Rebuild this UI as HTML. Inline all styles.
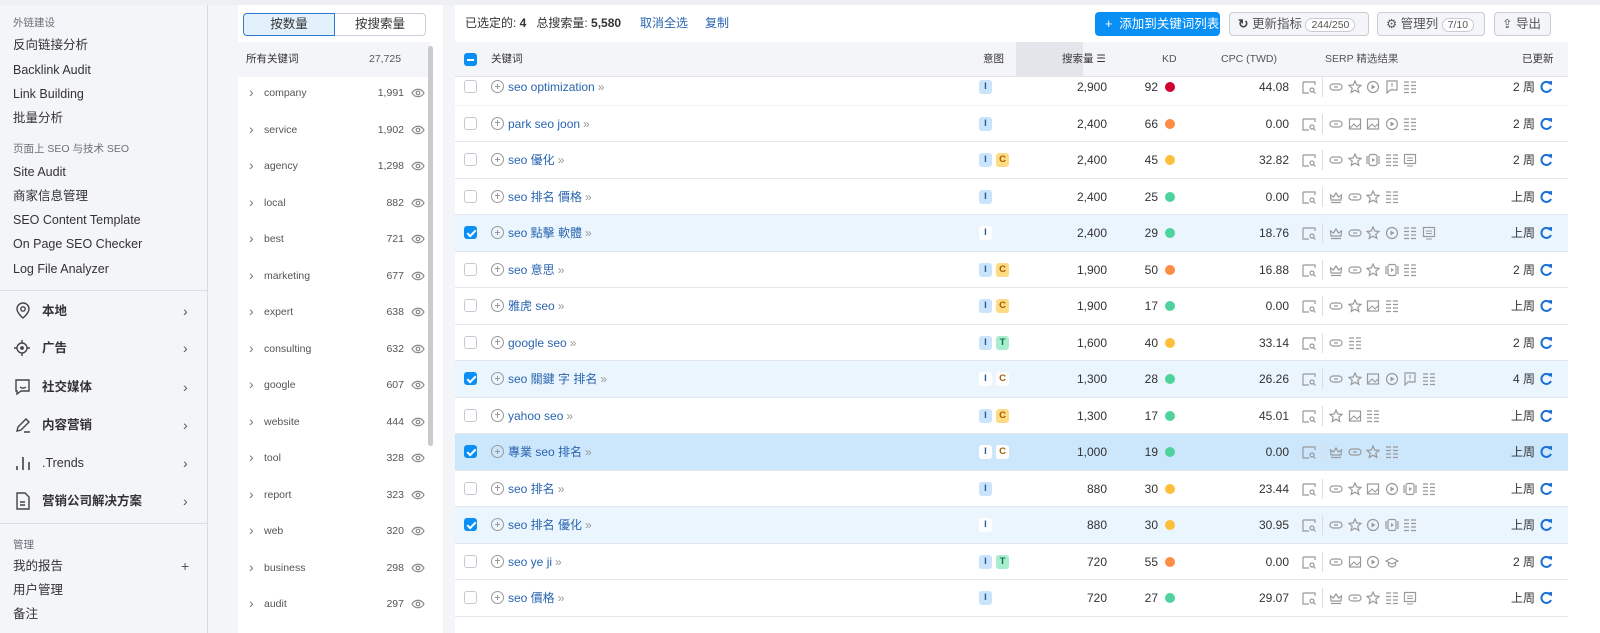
<!DOCTYPE html>
<html><head><meta charset="utf-8"><style>
*{box-sizing:border-box;margin:0;padding:0}
body{width:1600px;height:633px;overflow:hidden;background:#f4f5f9;font-family:"Liberation Sans","Noto Sans CJK SC",sans-serif;color:#333;position:relative;line-height:14px}
.a{position:absolute;white-space:nowrap;line-height:14px}
#side{left:0;top:5px;width:208px;height:628px;background:#f4f5f9;border-right:1px solid #d8dbe2}
.sm{font-size:10.5px;color:#6c6e79}
.si{font-size:12.5px;color:#333}
.nav{font-size:12.5px;font-weight:bold;color:#333}
.chev{color:#555;font-size:14px}
#panel{left:238px;top:5px;width:205px;height:628px;background:#fff}
.pi{font-size:10.5px;color:#555}
#main{left:455px;top:5px;width:1145px;height:628px;background:#fff}
.row{position:absolute;left:455px;width:1113px;height:36.5px;border-bottom:1px solid #e4e6eb;font-size:12px;line-height:14px}
.row div{line-height:14px}
.cb{position:absolute;left:9px;top:11px;width:13px;height:13px;border:1px solid #c5c8d0;border-radius:3px;background:#fff}
.cb.on{background:#0a8ff5;border-color:#0a8ff5}
.cb.on:after{content:"";position:absolute;left:3.5px;top:1px;width:3px;height:7px;border:solid #fff;border-width:0 2px 2px 0;transform:rotate(45deg)}
.pc{position:absolute;left:36px;top:11px;width:13px;height:13px;border:1.3px solid #999;border-radius:50%}
.pc:before{content:"";position:absolute;left:2.5px;top:4.7px;width:5.5px;height:1.3px;background:#999}
.pc:after{content:"";position:absolute;left:4.6px;top:2.5px;width:1.3px;height:5.5px;background:#999}
.kw{position:absolute;left:53px;top:11px;color:#2a65b0;font-size:12px}
.kw .gg{color:#999;margin-left:3px}
.bd{position:absolute;top:11px;width:13px;height:14px;border-radius:3px;font-size:9.5px;font-weight:bold;text-align:center;line-height:14px!important}
.bI{background:#c9e4fb;color:#2b5d9a}.bC{background:#fddb84;color:#a05a00}.bT{background:#a8edcd;color:#127050}
.bw{background:#fff!important}
.vol{position:absolute;right:461px;top:11px;color:#333}
.kd{position:absolute;right:410px;top:11px;color:#333}
.dot{position:absolute;left:710px;top:13px;width:10px;height:10px;border-radius:50%}
.cpc{position:absolute;right:279px;top:11px}
.ic{position:absolute;top:11px;width:14px;height:14px}
.up{position:absolute;right:33px;top:11px;color:#333}
.rf{position:absolute;right:15px;top:11px;width:14px;height:14px}
</style></head><body>
<div class="a" style="left:0;top:0;width:1600px;height:5px;background:#eef0f3"></div>
<div class="a" id="side"></div>
<div class="a sm" style="left:13px;top:16px">外链建设</div>
<div class="a si" style="left:13px;top:38px">反向链接分析</div>
<div class="a si" style="left:13px;top:63px">Backlink Audit</div>
<div class="a si" style="left:13px;top:87px">Link Building</div>
<div class="a si" style="left:13px;top:111px">批量分析</div>
<div class="a sm" style="left:13px;top:142px">页面上 SEO 与技术 SEO</div>
<div class="a si" style="left:13px;top:165px">Site Audit</div>
<div class="a si" style="left:13px;top:189px">商家信息管理</div>
<div class="a si" style="left:13px;top:213px">SEO Content Template</div>
<div class="a si" style="left:13px;top:237px">On Page SEO Checker</div>
<div class="a si" style="left:13px;top:262px">Log File Analyzer</div>
<div class="a" style="left:0;top:290px;width:207px;height:1px;background:#dcdfe5"></div>
<svg class="a" style="left:14px;top:302px" width="18" height="18" viewBox="0 0 18 18" fill="none" stroke="#444" stroke-width="1.4"><path d="M9 16s-6-5-6-9a6 6 0 0112 0c0 4-6 9-6 9z"/><circle cx="9" cy="7" r="2.2"/></svg>
<div class="a nav" style="left:42px;top:304px">本地</div><div class="a chev" style="left:183px;top:304px">›</div>
<svg class="a" style="left:13px;top:339px" width="18" height="18" viewBox="0 0 18 18" fill="none" stroke="#444" stroke-width="1.4"><circle cx="9" cy="9" r="5"/><circle cx="9" cy="9" r="1.2" fill="#444"/><path d="M9 1v3M9 14v3M1 9h3M14 9h3"/></svg>
<div class="a nav" style="left:42px;top:341px">广告</div><div class="a chev" style="left:183px;top:341px">›</div>
<svg class="a" style="left:14px;top:378px" width="18" height="18" viewBox="0 0 18 18" fill="none" stroke="#444" stroke-width="1.4"><path d="M2 2h13v11H7l-4 3V13H2z"/><path d="M6 9c2 1.5 4 1.5 6 0"/></svg>
<div class="a nav" style="left:42px;top:380px">社交媒体</div><div class="a chev" style="left:183px;top:380px">›</div>
<svg class="a" style="left:14px;top:416px" width="18" height="18" viewBox="0 0 18 18" fill="none" stroke="#444" stroke-width="1.4"><path d="M3 15l1-4 8-8 3 3-8 8z M10 16h6"/></svg>
<div class="a nav" style="left:42px;top:418px">内容营销</div><div class="a chev" style="left:183px;top:418px">›</div>
<svg class="a" style="left:14px;top:454px" width="18" height="18" viewBox="0 0 18 18" stroke="#444" stroke-width="1.6"><path d="M3 16v-4M9 16V3M15 16V8"/></svg>
<div class="a nav" style="left:42px;top:456px;font-weight:normal">.Trends</div><div class="a chev" style="left:183px;top:456px">›</div>
<svg class="a" style="left:15px;top:492px" width="16" height="18" viewBox="0 0 16 18" fill="none" stroke="#444" stroke-width="1.4"><path d="M2 1h8l4 4v12H2z M5 10h5M5 13h5"/></svg>
<div class="a nav" style="left:42px;top:494px">营销公司解决方案</div><div class="a chev" style="left:183px;top:494px">›</div>
<div class="a" style="left:0;top:523px;width:207px;height:1px;background:#dcdfe5"></div>
<div class="a sm" style="left:13px;top:538px">管理</div>
<div class="a si" style="left:13px;top:559px">我的报告</div><div class="a" style="left:181px;top:559px;font-size:14px;color:#555">+</div>
<div class="a si" style="left:13px;top:583px">用户管理</div>
<div class="a si" style="left:13px;top:607px">备注</div>

<div class="a" id="panel"></div>
<div class="a" style="left:243px;top:13px;width:92px;height:23px;border:1px solid #2e7bd0;border-radius:4px 0 0 4px;background:#e3f1fd;font-size:12.5px;text-align:center;line-height:21px;color:#333">按数量</div>
<div class="a" style="left:335px;top:13px;width:91px;height:23px;border:1px solid #ccd;border-left:none;border-radius:0 4px 4px 0;font-size:12.5px;text-align:center;line-height:21px;color:#333">按搜索量</div>
<div class="a" style="left:238px;top:42px;width:192px;height:35px;background:#f4f5f9"></div>
<div class="a pi" style="left:246px;top:52px;color:#333">所有关键词</div><div class="a pi" style="left:369px;top:52px">27,725</div>
<div class="a" style="left:428px;top:46px;width:5px;height:400px;background:#c8cace;border-radius:3px"></div>
<div id="pl"></div>

<div class="a" id="main"></div>
<div class="a" style="left:465px;top:16px;font-size:12px;color:#333">已选定的: <b>4</b> &nbsp; 总搜索量: <b>5,580</b></div>
<div class="a" style="left:640px;top:16px;font-size:12px;color:#2a65b0">取消全选</div>
<div class="a" style="left:705px;top:16px;font-size:12px;color:#2a65b0">复制</div>
<div class="a" style="left:1095px;top:12px;width:125px;height:24px;background:#0a8ff5;border-radius:4px;color:#fff;font-size:12.5px;line-height:24px;padding-left:10px">+ &nbsp;添加到关键词列表</div>
<div class="a" style="left:1229px;top:12px;width:140px;height:24px;border:1px solid #c8cbd3;border-radius:4px;background:#f4f5f9;font-size:12.5px;line-height:22px;padding-left:8px;color:#555"><b style="color:#444">↻</b> 更新指标 <span style="border:1px solid #c8cbd3;border-radius:10px;padding:0 5px;font-size:10.5px;background:#fff">244/250</span></div>
<div class="a" style="left:1377px;top:12px;width:108px;height:24px;border:1px solid #c8cbd3;border-radius:4px;background:#f4f5f9;font-size:12.5px;line-height:22px;padding-left:8px;color:#555">⚙ 管理列 <span style="border:1px solid #c8cbd3;border-radius:10px;padding:0 5px;font-size:10.5px;background:#fff">7/10</span></div>
<div class="a" style="left:1494px;top:12px;width:57px;height:24px;border:1px solid #c8cbd3;border-radius:4px;background:#f4f5f9;font-size:12.5px;line-height:22px;padding-left:7px;color:#555">⇪ 导出</div>

<div class="a" style="left:455px;top:42px;width:1113px;height:35px;background:#f4f5f9;border-bottom:1px solid #e1e3e8"></div>
<div class="a" style="left:1016px;top:42px;width:67px;height:35px;background:#e3e5ea"></div>
<div class="a" style="left:464px;top:53px;width:13px;height:13px;border-radius:3px;background:#0a8ff5"><div style="position:absolute;left:3px;top:5.5px;width:7px;height:2px;background:#fff"></div></div>
<div class="a" style="left:491px;top:52px;font-size:10.5px;color:#333">关键词</div>
<div class="a" style="left:983px;top:52px;font-size:10.5px;color:#333">意图</div>
<div class="a" style="left:1062px;top:52px;font-size:10.5px;color:#333">搜索量 ☰</div>
<div class="a" style="left:1162px;top:52px;font-size:10.5px;color:#555">KD</div>
<div class="a" style="left:1221px;top:52px;font-size:10.5px;color:#555">CPC (TWD)</div>
<div class="a" style="left:1325px;top:52px;font-size:10.5px;color:#555">SERP 精选结果</div>
<div class="a" style="left:1522px;top:52px;font-size:10.5px;color:#333">已更新</div>
<div id="rows"></div>

<svg width="0" height="0" style="position:absolute">
<defs>
<symbol id="q" viewBox="0 0 14 14"><g fill="none" stroke="#999" stroke-width="1.2"><path d="M1 2h12v3M1 2v11h6"/><circle cx="10" cy="10" r="2"/><path d="M11.5 11.5l2 2"/></g></symbol>
<symbol id="ln" viewBox="0 0 14 14"><g fill="none" stroke="#999" stroke-width="1.2"><rect x="1" y="4" width="12" height="6" rx="3"/><path d="M5 7h4"/></g></symbol>
<symbol id="st" viewBox="0 0 14 14"><path d="M7 1l1.8 4 4.2.4-3.2 2.8 1 4.2L7 10.2 3.2 12.4l1-4.2L1 5.4l4.2-.4z" fill="none" stroke="#999" stroke-width="1.2"/></symbol>
<symbol id="pl" viewBox="0 0 14 14"><circle cx="7" cy="7" r="5.5" fill="none" stroke="#999" stroke-width="1.2"/><path d="M5.5 4.5v5l4-2.5z" fill="#999"/></symbol>
<symbol id="fq" viewBox="0 0 14 14"><path d="M2 1h10v9H5l-3 3z" fill="none" stroke="#999" stroke-width="1.2"/><path d="M7 3v3.5M7 8v.5" stroke="#999" stroke-width="1.2"/></symbol>
<symbol id="ls" viewBox="0 0 14 14"><path d="M1 2h5M8 2h5M1 5.5h5M8 5.5h5M1 9h5M8 9h5M1 12.5h5M8 12.5h5" stroke="#999" stroke-width="1.3"/></symbol>
<symbol id="im" viewBox="0 0 14 14"><rect x="1.5" y="2" width="11" height="10" fill="none" stroke="#999" stroke-width="1.2"/><path d="M2 11l4-4 3 3 3-3" fill="none" stroke="#999" stroke-width="1.1"/></symbol>
<symbol id="vd" viewBox="0 0 14 14"><rect x="3" y="1.5" width="8" height="11" rx="2" fill="none" stroke="#999" stroke-width="1.2"/><path d="M1 3v8M13 3v8" stroke="#999" stroke-width="1.2"/><path d="M6 5v4l3-2z" fill="#999"/></symbol>
<symbol id="ad" viewBox="0 0 14 14"><rect x="1.5" y="1.5" width="11" height="9" fill="none" stroke="#999" stroke-width="1.2"/><path d="M4 13h6M4 5h6M4 7.5h6" stroke="#999"/></symbol>
<symbol id="cr" viewBox="0 0 14 14"><path d="M2 10l-.5-5 3 2L7 3l2.5 4 3-2-.5 5z M2 12.5h10" fill="none" stroke="#999" stroke-width="1.2"/></symbol>
<symbol id="ed" viewBox="0 0 14 14"><path d="M1 6l6-3 6 3-6 3z M3.5 7.5v3c2 2 5 2 7 0v-3" fill="none" stroke="#999" stroke-width="1.2"/></symbol>
<symbol id="rf" viewBox="0 0 14 14"><path d="M11.5 4A5 5 0 1 0 12 9" fill="none" stroke="#1a6fd6" stroke-width="2"/><path d="M8.5 1.5L13 1v4.5z" fill="#1a6fd6"/></symbol>
</defs></svg>
<script>
var P=[["company","1,991"],["service","1,902"],["agency","1,298"],["local","882"],["best","721"],["marketing","677"],["expert","638"],["consulting","632"],["google","607"],["website","444"],["tool","328"],["report","323"],["web","320"],["business","298"],["audit","297"]];
var h="";P.forEach(function(p,i){var y=86+36.5*i;h+='<div class="a" style="left:249px;top:'+(y-1)+'px;color:#777;font-size:14px">›</div><div class="a pi" style="left:264px;top:'+y+'px">'+p[0]+'</div><div class="a pi" style="right:1196px;top:'+y+'px">'+p[1]+'</div><svg class="a" style="left:411px;top:'+(y+2)+'px" width="14" height="10" viewBox="0 0 14 10"><path d="M1 5c3-5 9-5 12 0-3 5-9 5-12 0z" fill="none" stroke="#888" stroke-width="1.2"/><circle cx="7" cy="5" r="1.8" fill="none" stroke="#888" stroke-width="1.2"/></svg>';});
document.getElementById("pl").outerHTML=h;
var C={r:"#d1002f",o:"#ff8c43",y:"#ffbe3a",g:"#4fd39c"};
var R=[
[0,"seo optimization","I","2,900","92","r","44.08","ln st pl fq ls","2 周"],
[0,"park seo joon","I","2,400","66","o","0.00","ln im im pl ls","2 周"],
[0,"seo 優化","IC","2,400","45","y","32.82","ln st vd ls ad","2 周"],
[0,"seo 排名 價格","I","2,400","25","g","0.00","cr ln st ls","上周"],
[1,"seo 點擊 軟體","I","2,400","29","g","18.76","cr ln st pl ls ad","上周"],
[0,"seo 意思","IC","1,900","50","o","16.88","cr ln st vd ls","2 周"],
[0,"雅虎 seo","IC","1,900","17","g","0.00","ln st im ls","上周"],
[0,"google seo","IT","1,600","40","y","33.14","ln ls","2 周"],
[1,"seo 關鍵 字 排名","IC","1,300","28","g","26.26","ln st im pl fq ls","4 周"],
[0,"yahoo seo","IC","1,300","17","g","45.01","st im ls","上周"],
[2,"專業 seo 排名","IC","1,000","19","g","0.00","cr ln st ls","上周"],
[0,"seo 排名","I","880","30","y","23.44","ln st im pl vd ls","上周"],
[1,"seo 排名 優化","I","880","30","y","30.95","ln st pl vd ls","上周"],
[0,"seo ye ji","IT","720","55","o","0.00","ln im pl ed","2 周"],
[0,"seo 價格","I","720","27","g","29.07","cr ln st ls ad","上周"]];
h="";R.forEach(function(r,i){var t=69+36.5*i;var bg=r[0]==2?"#cce6fb":r[0]==1?"#eaf5fe":"#fff";
h+='<div class="row" style="top:'+t+'px;background:'+bg+(i==0?';clip-path:inset(8px 0 0 0)':'')+'">';
h+='<div class="cb'+(r[0]?' on':'')+'"></div><div class="pc"></div><div class="kw">'+r[1]+'<span class="gg">»</span></div>';
r[2].split("").forEach(function(b,j){h+='<div class="bd b'+b+(r[0]?' bw':'')+'" style="left:'+(524+j*17)+'px">'+b+'</div>';});
h+='<div class="vol">'+r[3]+'</div><div class="kd">'+r[4]+'</div><div class="dot" style="background:'+C[r[5]]+'"></div><div class="cpc">'+r[6]+'</div>';
h+='<svg class="ic" style="left:847px"><use href="#q"/></svg><div style="position:absolute;left:867px;top:8px;width:1px;height:20px;background:#ddd"></div>';
r[7].split(" ").forEach(function(s,j){h+='<svg class="ic" style="left:'+(874+j*18.5)+'px"><use href="#'+s+'"/></svg>';});
h+='<div class="up">'+r[8]+'</div><svg class="rf"><use href="#rf"/></svg></div>';});
document.getElementById("rows").outerHTML=h;
</script>
</body></html>
